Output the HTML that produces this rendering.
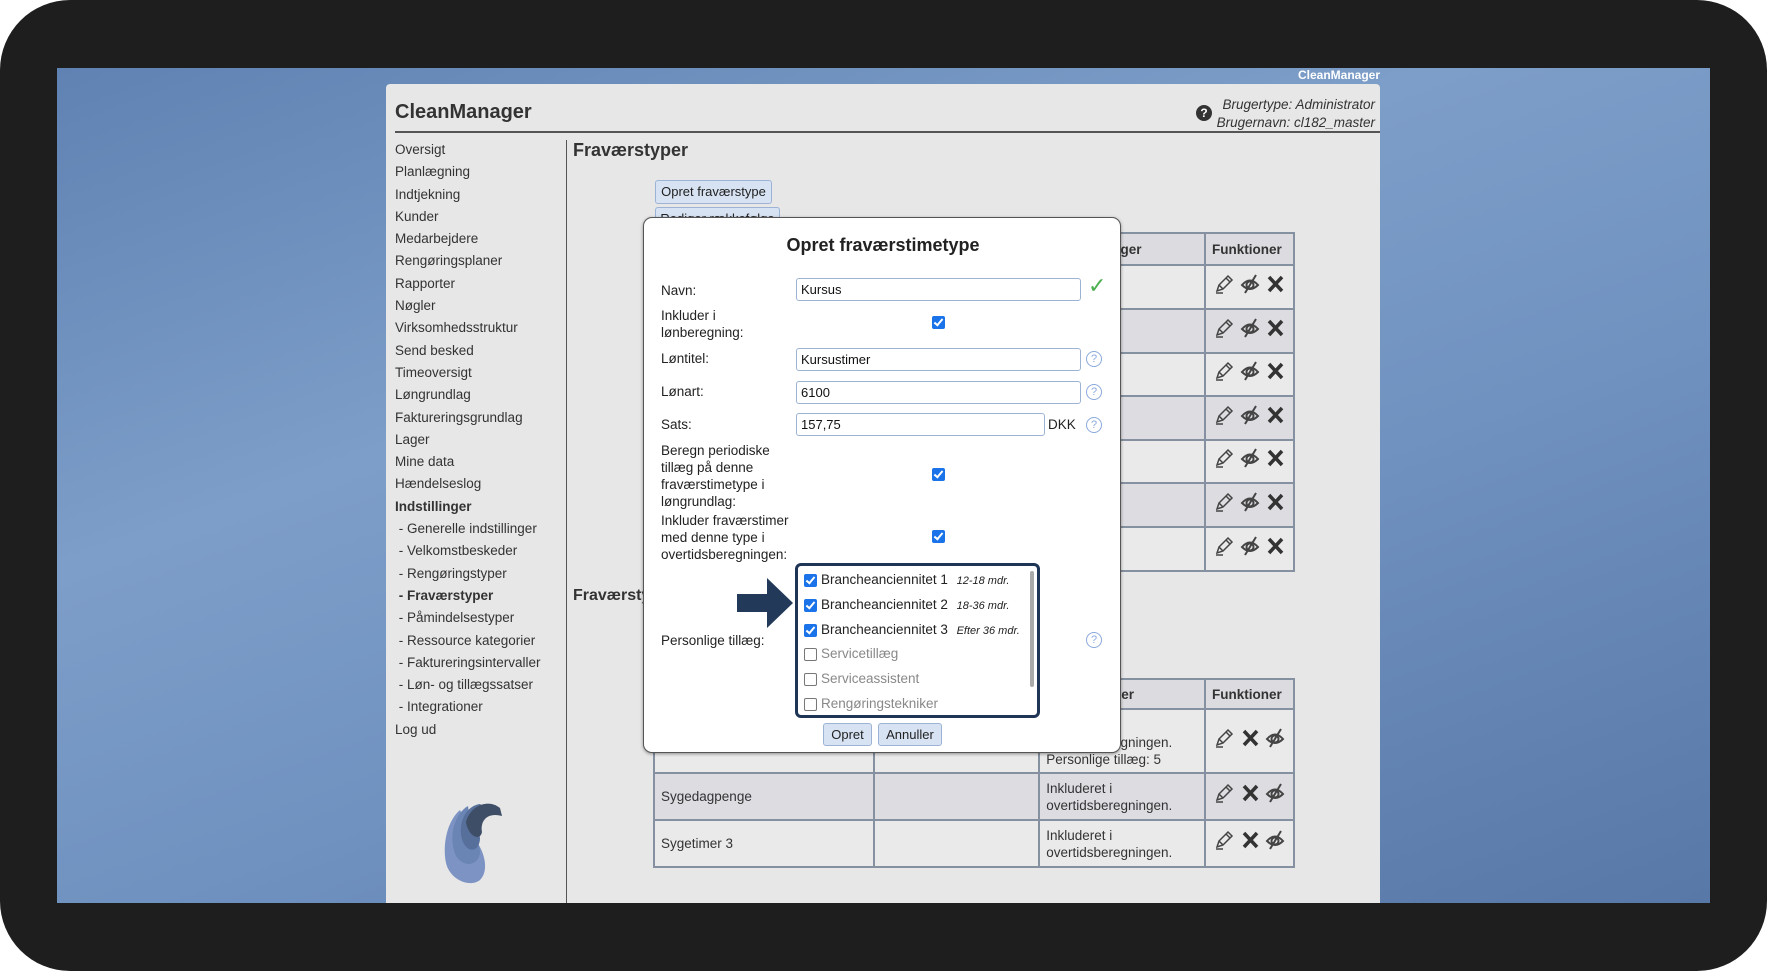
<!DOCTYPE html>
<html><head><meta charset="utf-8">
<style>
*{margin:0;padding:0;box-sizing:border-box}
body{width:1767px;height:971px;background:#fff;font-family:"Liberation Sans",sans-serif;overflow:hidden;position:relative}
.frame{position:absolute;left:0;top:0;width:1767px;height:971px;border-radius:70px;background:#1e1e1e}
.blue{position:absolute;left:57px;top:68px;width:1653px;height:835px;background:linear-gradient(160deg,#5f82b3 0%,#7d9ec8 35%,#7092c0 60%,#5878a8 100%)}
.a{position:absolute;white-space:nowrap}
.panel{position:absolute;left:386px;top:84px;width:994px;height:819px;background:#e7e7e7;border-radius:4px 4px 0 0}
.side{position:absolute;left:395px;top:139px;font-size:13.5px;color:#333;line-height:22.3px}
.side div.b{font-weight:bold}
table{border-collapse:collapse;position:absolute;font-size:13.5px;color:#333}
td,th{border:2px solid #8590a0;padding:0 6px;text-align:left}
th{background:#dcdce0;font-weight:bold;color:#333}
.dk{background:#dcdce1}.lt{background:#eaeaea}
.ic{display:inline-block;vertical-align:middle}
.dlg{position:absolute;left:643px;top:217px;width:478px;height:536px;background:#fff;border:1px solid #555;border-radius:9px;box-shadow:0 1px 3px rgba(0,0,0,.4)}
.lbl{position:absolute;font-size:13.5px;color:#222;line-height:17px}
.inp{position:absolute;height:23px;border:1px solid #9db3d6;border-radius:3px;font-size:13px;padding:3px 4px;color:#111;background:#fff}
.cb{position:absolute;width:13px;height:13px;border-radius:2px;background:#1a73e8}
.cb:after{content:"";position:absolute;left:4px;top:1px;width:3px;height:7px;border:solid #fff;border-width:0 2px 2px 0;transform:rotate(40deg)}
.cbe{position:absolute;width:13px;height:13px;border:1px solid #777;border-radius:2px;background:#fff}
.hq{position:absolute;width:16px;height:16px;border:1px solid #8aa9dd;border-radius:50%;color:#8aa9dd;font-size:11px;text-align:center;line-height:14px}
.btn{position:absolute;border:1px solid #9db3d6;background:#d7e3f3;border-radius:3px;font-size:13px;color:#222;text-align:center}
</style></head><body>
<div class="frame"></div>
<div class="blue"></div>
<div class="a" style="right:387px;top:68px;color:#fff;font-weight:bold;font-size:12px">CleanManager</div>
<div class="panel"></div>
<div class="a" style="left:395px;top:101px;font-size:20px;font-weight:bold;color:#333">CleanManager</div>
<div class="a" style="left:1196px;top:105px;width:16px;height:16px;border-radius:50%;background:#333;color:#fff;font-weight:bold;font-size:12px;text-align:center;line-height:16px">?</div>
<div class="a" style="right:392px;top:96px;font-size:13.5px;font-style:italic;color:#333;text-align:right;line-height:18px">Brugertype: Administrator<br>Brugernavn: cl182_master</div>
<div class="a" style="left:395px;top:131px;width:985px;height:2px;background:#555"></div>
<div class="a" style="left:566px;top:140px;width:1px;height:763px;background:#555"></div>
<div class="side">
<div>Oversigt</div><div>Planlægning</div><div>Indtjekning</div><div>Kunder</div><div>Medarbejdere</div><div>Rengøringsplaner</div><div>Rapporter</div><div>Nøgler</div><div>Virksomhedsstruktur</div><div>Send besked</div><div>Timeoversigt</div><div>Løngrundlag</div><div>Faktureringsgrundlag</div><div>Lager</div><div>Mine data</div><div>Hændelseslog</div><div class="b">Indstillinger</div>
<div>&nbsp;- Generelle indstillinger</div><div>&nbsp;- Velkomstbeskeder</div><div>&nbsp;- Rengøringstyper</div><div class="b">&nbsp;- Fraværstyper</div><div>&nbsp;- Påmindelsestyper</div><div>&nbsp;- Ressource kategorier</div><div>&nbsp;- Faktureringsintervaller</div><div>&nbsp;- Løn- og tillægssatser</div><div>&nbsp;- Integrationer</div><div>Log ud</div>
</div>
<svg class="a" style="left:440px;top:798px" width="70" height="90" viewBox="0 0 70 90">
<path d="M20 12 C8 22 2 45 6 65 C10 82 30 90 40 82 C50 72 44 52 34 40 Z" fill="#7d93c4"/>
<path d="M28 8 C14 16 8 40 16 58 C24 70 38 68 40 55 C40 42 30 30 30 22 Z" fill="#6a84b4"/>
<path d="M40 6 C24 8 16 30 24 46 C30 56 40 52 40 40 C38 28 42 18 50 14 Z" fill="#566f9b"/>
<path d="M60 10 C48 0 30 8 26 24 C28 38 40 44 42 34 C40 22 48 14 62 18 Z" fill="#3e4e66"/>
</svg>
<div class="a" style="left:573px;top:140px;font-size:18px;font-weight:bold;color:#333">Fraværstyper</div>
<div class="btn" style="left:655px;top:180px;width:117px;height:24px;line-height:22px">Opret fraværstype</div>
<div class="btn" style="left:655px;top:207px;width:125px;height:24px;line-height:22px">Rediger rækkefølge</div>
<div class="a" style="left:573px;top:587px;font-size:16px;font-weight:bold;color:#333">Fraværstyper</div>

<table style="left:653px;top:232px;width:642px">
<tr style="height:32px"><th style="width:221px"></th><th style="width:166px"></th><th style="width:166px">Bemærkninger</th><th style="width:89px">Funktioner</th></tr>
<tr class="lt" style="height:44px"><td></td><td></td><td></td><td></td></tr>
<tr class="dk" style="height:44px"><td></td><td></td><td></td><td></td></tr>
<tr class="lt" style="height:43px"><td></td><td></td><td></td><td></td></tr>
<tr class="dk" style="height:44px"><td></td><td></td><td></td><td></td></tr>
<tr class="lt" style="height:43px"><td></td><td></td><td></td><td></td></tr>
<tr class="dk" style="height:44px"><td></td><td></td><td></td><td></td></tr>
<tr class="lt" style="height:44px"><td></td><td></td><td></td><td></td></tr>
</table>

<table style="left:653px;top:678px;width:642px">
<tr style="height:30px"><th style="width:221px"></th><th style="width:166px"></th><th style="width:166px">Kommentarer</th><th style="width:89px">Funktioner</th></tr>
<tr class="lt" style="height:64px"><td></td><td></td><td style="line-height:17px;vertical-align:bottom;padding-bottom:4px">overtidsberegningen.<br>Personlige tillæg: 5</td><td></td></tr>
<tr class="dk" style="height:47px"><td>Sygedagpenge</td><td></td><td style="line-height:17px">Inkluderet i<br>overtidsberegningen.</td><td></td></tr>
<tr class="lt" style="height:47px"><td>Sygetimer 3</td><td></td><td style="line-height:17px">Inkluderet i<br>overtidsberegningen.</td><td></td></tr>
</table>

<div class="dlg">
<div class="a" style="left:0;width:478px;top:17px;text-align:center;font-size:18px;font-weight:bold;color:#222">Opret fraværstimetype</div>
<div class="lbl" style="left:17px;top:64px">Navn:</div>
<div class="inp" style="left:152px;top:60px;width:285px">Kursus</div>
<div class="a" style="left:444px;top:55px;color:#4caf50;font-size:22px">✓</div>
<div class="lbl" style="left:17px;top:89px">Inkluder i<br>lønberegning:</div>
<div class="cb" style="left:288px;top:98px"></div>
<div class="lbl" style="left:17px;top:132px">Løntitel:</div>
<div class="inp" style="left:152px;top:130px;width:285px">Kursustimer</div>
<div class="hq" style="left:442px;top:133px">?</div>
<div class="lbl" style="left:17px;top:165px">Lønart:</div>
<div class="inp" style="left:152px;top:163px;width:285px">6100</div>
<div class="hq" style="left:442px;top:166px">?</div>
<div class="lbl" style="left:17px;top:198px">Sats:</div>
<div class="inp" style="left:152px;top:195px;width:249px">157,75</div>
<div class="lbl" style="left:404px;top:198px">DKK</div>
<div class="hq" style="left:442px;top:199px">?</div>
<div class="lbl" style="left:17px;top:224px">Beregn periodiske<br>tillæg på denne<br>fraværstimetype i<br>løngrundlag:</div>
<div class="cb" style="left:288px;top:250px"></div>
<div class="lbl" style="left:17px;top:294px">Inkluder fraværstimer<br>med denne type i<br>overtidsberegningen:</div>
<div class="cb" style="left:288px;top:312px"></div>
<div class="lbl" style="left:17px;top:414px">Personlige tillæg:</div>
<div class="hq" style="left:442px;top:414px">?</div>
<svg class="a" style="left:93px;top:360px" width="58" height="50" viewBox="0 0 58 50"><path d="M0 16 H30 V0 L56 25 L30 50 V34 H0 Z" fill="#22395a"/></svg>
<div class="a" style="left:151px;top:345px;width:245px;height:155px;border:3px solid #1f3556;border-radius:6px;background:#fff;overflow:hidden">
<div class="a" style="right:3px;top:5px;width:4px;height:116px;background:#aaa;border-radius:2px"></div>
<div class="cb" style="left:6px;top:8px"></div><div class="a" style="left:23px;top:6px;font-size:13.5px;color:#222">Brancheanciennitet 1 <i style="font-size:11px;margin-left:5px">12-18 mdr.</i></div>
<div class="cb" style="left:6px;top:33px"></div><div class="a" style="left:23px;top:31px;font-size:13.5px;color:#222">Brancheanciennitet 2 <i style="font-size:11px;margin-left:5px">18-36 mdr.</i></div>
<div class="cb" style="left:6px;top:58px"></div><div class="a" style="left:23px;top:56px;font-size:13.5px;color:#222">Brancheanciennitet 3 <i style="font-size:11px;margin-left:5px">Efter 36 mdr.</i></div>
<div class="cbe" style="left:6px;top:82px"></div><div class="a" style="left:23px;top:80px;font-size:13.5px;color:#888">Servicetillæg</div>
<div class="cbe" style="left:6px;top:107px"></div><div class="a" style="left:23px;top:105px;font-size:13.5px;color:#888">Serviceassistent</div>
<div class="cbe" style="left:6px;top:132px"></div><div class="a" style="left:23px;top:130px;font-size:13.5px;color:#888">Rengøringstekniker</div>
</div>
<div class="btn" style="left:179px;top:505px;width:49px;height:23px;line-height:21px">Opret</div>
<div class="btn" style="left:234px;top:505px;width:64px;height:23px;line-height:21px">Annuller</div>
</div>

<svg width="0" height="0" style="position:absolute">
<defs>
<g id="pen"><path d="M2 17 L4 11 L13 2 L17 6 L8 15 Z M4 11 L8 15 M11 4 L15 8" fill="none" stroke="#444" stroke-width="1.5"/><path d="M1 19 H8" stroke="#444" stroke-width="1.5"/></g>
<g id="eye"><path d="M2 11 Q10 2 18 11 Q10 19 2 11 Z" fill="none" stroke="#444" stroke-width="2"/><circle cx="10" cy="11" r="3.5" fill="none" stroke="#444" stroke-width="2"/><path d="M5 19 L16 1" stroke="#444" stroke-width="2"/></g>
<g id="x"><path d="M3 3 L16 17 M16 3 L3 17" stroke="#333" stroke-width="3.5"/></g>
</defs></svg>
<svg class="a" style="left:0;top:0;pointer-events:none" width="1767" height="971">
<g transform="translate(1215,274)"><use href="#pen"/><use href="#eye" x="25"/><use href="#x" x="51"/></g>
<g transform="translate(1215,318)"><use href="#pen"/><use href="#eye" x="25"/><use href="#x" x="51"/></g>
<g transform="translate(1215,361)"><use href="#pen"/><use href="#eye" x="25"/><use href="#x" x="51"/></g>
<g transform="translate(1215,405)"><use href="#pen"/><use href="#eye" x="25"/><use href="#x" x="51"/></g>
<g transform="translate(1215,448)"><use href="#pen"/><use href="#eye" x="25"/><use href="#x" x="51"/></g>
<g transform="translate(1215,492)"><use href="#pen"/><use href="#eye" x="25"/><use href="#x" x="51"/></g>
<g transform="translate(1215,536)"><use href="#pen"/><use href="#eye" x="25"/><use href="#x" x="51"/></g>
<g transform="translate(1215,728)"><use href="#pen"/><use href="#x" x="26"/><use href="#eye" x="50"/></g>
<g transform="translate(1215,783)"><use href="#pen"/><use href="#x" x="26"/><use href="#eye" x="50"/></g>
<g transform="translate(1215,830)"><use href="#pen"/><use href="#x" x="26"/><use href="#eye" x="50"/></g>
</svg>
</body></html>
